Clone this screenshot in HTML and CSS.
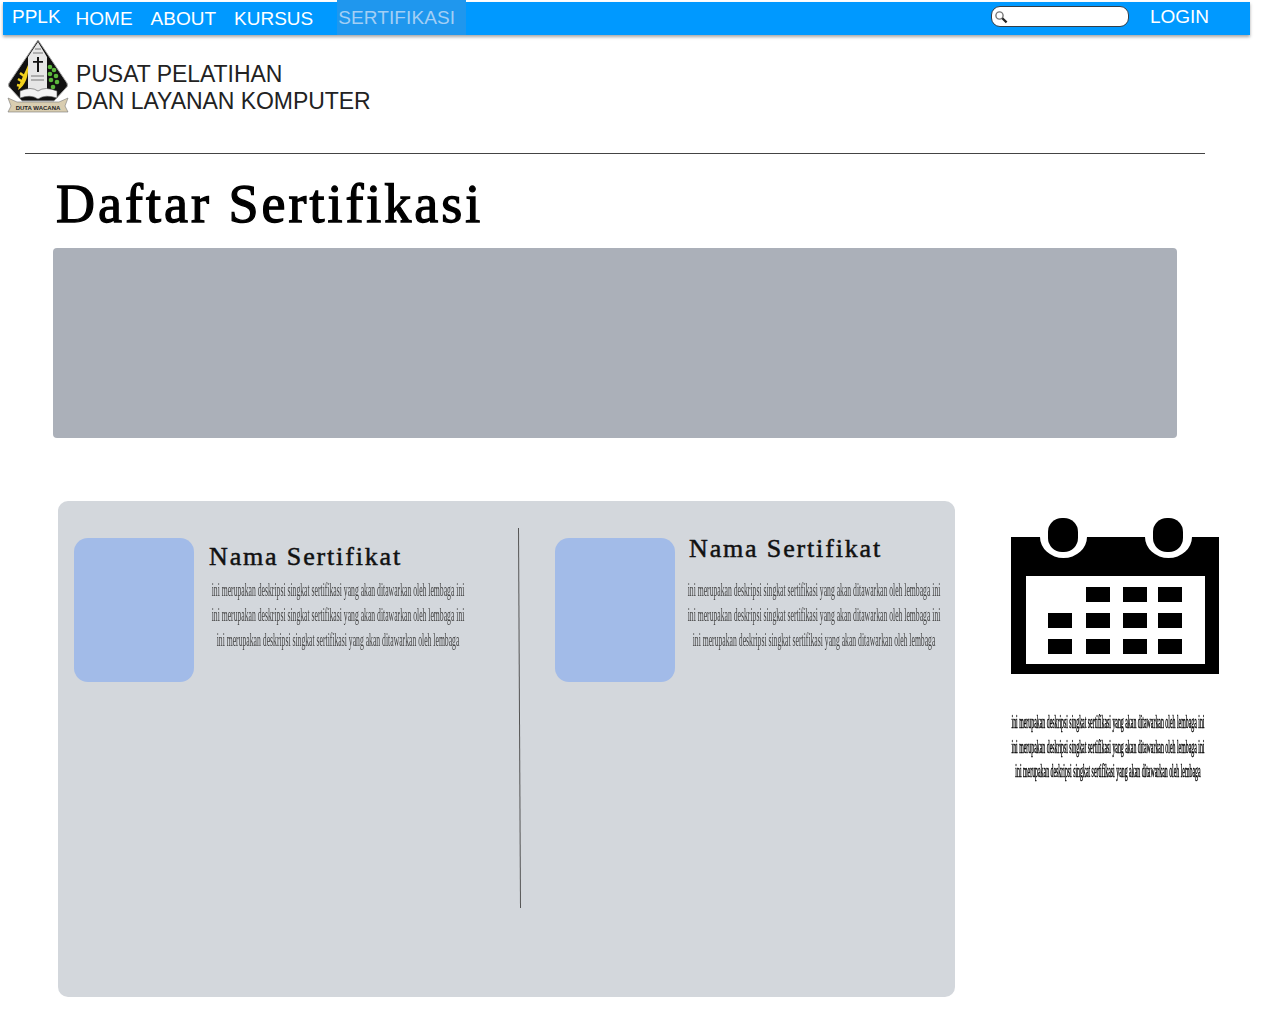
FILE: index.html
```html
<!DOCTYPE html>
<html>
<head>
<meta name="viewport" content="width=device-width, initial-scale=1">
<link rel="stylesheet" href="styles.css">
</head>
<body>

<div class="nav">
  <a class="brand">PPLK</a>
  <a class="nav-link home">HOME</a>
  <a class="nav-link about">ABOUT</a>
  <a class="nav-link kursus">KURSUS</a>
  <a class="nav-link active">SERTIFIKASI</a>
  <div class="search">
    <svg width="14" height="14" viewBox="0 0 14 14">
      <circle cx="5.5" cy="5.5" r="3.6" fill="#fff" stroke="#777" stroke-width="1.4"/>
      <path d="M8.3 8.3L12.6 12.4" stroke="#222" stroke-width="2.2"/>
    </svg>
  </div>
  <a class="login">LOGIN</a>
</div>

<div class="brand-row">
  <svg class="logo" width="62" height="74" viewBox="0 0 62 74">
    <path d="M31 0L60 43Q62 46 58 49L47 61H15L4 49Q0 46 2 43Z" fill="#111" stroke="#aaa" stroke-width="1"/>
    <path d="M31 2L40 17V54H21V17Z" fill="#e6e6e6"/>
    <path d="M30 17h2v4h4v1.8h-4V32h-2V22.8h-4V21h4z" fill="#111"/>
    <path d="M28 9h6M26 13h10M24 36h13M24 40h13" stroke="#777" stroke-width="1"/>
    <path d="M21 25C18 33 13 41 11 50C18 46 22 36 21 25Z" fill="#f2d21e"/>
    <path d="M13 33l4 3M11 39l5 3M10 45l4 1" stroke="#f2d21e" stroke-width="2.4"/>
    <g fill="#5cb83c">
      <circle cx="43" cy="27" r="2.3"/><circle cx="47" cy="30" r="2.3"/>
      <circle cx="43" cy="34" r="2.3"/><circle cx="49" cy="36" r="2.3"/>
      <circle cx="44" cy="40" r="2.3"/><circle cx="50" cy="42" r="2.3"/>
      <circle cx="46" cy="47" r="2.3"/>
    </g>
    <path d="M13 51Q24 46 31 51Q38 46 50 51V58Q38 54 31 59Q24 54 13 58Z" fill="#f4f4f4" stroke="#555" stroke-width=".6"/>
    <path d="M1 58L10 62L52 62L61 58L58 66L61 72H1L4 66Z" fill="#d9cdb0" stroke="#777" stroke-width=".6"/>
    <text x="31" y="70" class="logo-text" text-anchor="middle">DUTA WACANA</text>
  </svg>
  <div class="brand-name">PUSAT PELATIHAN<br>DAN LAYANAN KOMPUTER</div>
</div>

<hr class="rule">

<h1 class="page-title">Daftar Sertifikasi</h1>

<div class="banner"></div>

<div class="content">
  <div class="panel">
    <div class="cert cert-left">
      <div class="thumb"></div>
      <div>
        <h2 class="cert-title">Nama Sertifikat</h2>
        <div class="desc-box">
          <p class="desc">ini merupakan deskripsi singkat sertifikasi yang akan ditawarkan oleh lembaga ini<br>ini merupakan deskripsi singkat sertifikasi yang akan ditawarkan oleh lembaga ini<br>ini merupakan deskripsi singkat sertifikasi yang akan ditawarkan oleh lembaga</p>
        </div>
      </div>
    </div>
    <div class="divider"></div>
    <div class="cert cert-right">
      <div class="thumb"></div>
      <div>
        <h2 class="cert-title">Nama Sertifikat</h2>
        <div class="desc-box">
          <p class="desc">ini merupakan deskripsi singkat sertifikasi yang akan ditawarkan oleh lembaga ini<br>ini merupakan deskripsi singkat sertifikasi yang akan ditawarkan oleh lembaga ini<br>ini merupakan deskripsi singkat sertifikasi yang akan ditawarkan oleh lembaga</p>
        </div>
      </div>
    </div>
  </div>

  <div class="side">
    <svg class="calendar" width="208" height="156" viewBox="0 0 208 156">
      <rect x="0" y="19" width="208" height="137" fill="#000"/>
      <rect x="15" y="58" width="179" height="88" fill="#fff"/>
      <path d="M29 19a23.5 21 0 0 0 47 0zM134 19a23.5 21 0 0 0 47 0z" fill="#fff"/>
      <rect x="37" y="0" width="30" height="34" rx="14" fill="#000"/>
      <rect x="142" y="0" width="30" height="34" rx="14" fill="#000"/>
      <g fill="#000">
        <rect x="75" y="69" width="24" height="15"/><rect x="112" y="69" width="24" height="15"/><rect x="147" y="69" width="24" height="15"/>
        <rect x="37" y="95" width="24" height="15"/><rect x="75" y="95" width="24" height="15"/><rect x="112" y="95" width="24" height="15"/><rect x="147" y="95" width="24" height="15"/>
        <rect x="37" y="121" width="24" height="15"/><rect x="75" y="121" width="24" height="15"/><rect x="112" y="121" width="24" height="15"/><rect x="147" y="121" width="24" height="15"/>
      </g>
    </svg>
    <div class="side-box">
      <p class="side-desc">ini merupakan deskripsi singkat sertifikasi yang akan ditawarkan oleh lembaga ini<br>ini merupakan deskripsi singkat sertifikasi yang akan ditawarkan oleh lembaga ini<br>ini merupakan deskripsi singkat sertifikasi yang akan ditawarkan oleh lembaga</p>
    </div>
  </div>
</div>

</body>
</html>
```
FILE: styles.css
```css
* {
  box-sizing: border-box;
}

body {
  margin: 0;
  background-color: #fff;
  font-family: "Liberation Sans", Arial, sans-serif;
}

.nav {
  display: flex;
  align-items: center;
  width: 1247px;
  height: 33px;
  margin: 2px 0 0 3px;
  background-color: #0099ff;
  box-shadow: 0 2px 3px rgba(0, 0, 0, .35);
  color: #fff;
  font-size: 19px;
}

.brand {
  margin: -3px 15px 0 9px;
}

.nav-link {
  margin-right: 18px;
}

.nav-link.kursus {
  margin-right: 24px;
}

.nav-link.active {
  align-self: stretch;
  display: flex;
  align-items: center;
  width: 129px;
  margin: -2px 0 0 0;
  padding: 0 0 0 1px;
  background-color: #1f97ee;
  color: #a3cff5;
  letter-spacing: .1px;
}

.search {
  display: flex;
  align-items: center;
  width: 138px;
  height: 21px;
  margin: -4px 0 0 auto;
  padding-left: 2px;
  background-color: #fff;
  border: 1.5px solid #333f4a;
  border-radius: 9px;
}

.login {
  margin: -4px 41px 0 21px;
}

.brand-row {
  display: flex;
  align-items: flex-start;
  height: 113px;
  margin-top: 5px;
  padding-left: 7px;
}

.logo-text {
  font: bold 6px "Liberation Sans", Arial, sans-serif;
  fill: #222;
}

.brand-name {
  margin: 21px 0 0 7px;
  color: #222;
  font-size: 23px;
  line-height: 27px;
  letter-spacing: -.05px;
}

.rule {
  width: 1180px;
  height: 1px;
  margin: 0 0 0 25px;
  border: 0;
  background-color: #444;
}

.page-title {
  height: 94px;
  margin: 0 0 0 56px;
  padding-top: 20px;
  color: #000;
  font: normal 54px/60px "Liberation Serif", serif;
  letter-spacing: 3px;
  -webkit-text-stroke: 1.3px #000;
}

.banner {
  width: 1124px;
  height: 190px;
  margin-left: 53px;
  background-color: #abb0b9;
  border-radius: 4px;
}

.content {
  display: flex;
  align-items: flex-start;
  margin: 63px 0 0 58px;
}

.panel {
  display: flex;
  align-items: flex-start;
  width: 897px;
  height: 496px;
  padding-top: 27px;
  background-color: #d3d7dc;
  border-radius: 10px;
}

.cert {
  display: flex;
  padding-top: 10px;
}

.cert-left {
  width: 461px;
  padding-left: 16px;
  column-gap: 15px;
}

.cert-right {
  padding-left: 35px;
  column-gap: 14px;
}

.divider {
  width: 1px;
  height: 380px;
  background-color: #555;
  transform: rotate(-.3deg);
}

.thumb {
  flex: none;
  width: 120px;
  height: 144px;
  background-color: #a2bbe8;
  border-radius: 14px;
}

.cert-title {
  height: 30px;
  margin: 0;
  color: #111;
  font: normal 26px/30px "Liberation Serif", serif;
  letter-spacing: 1.85px;
  -webkit-text-stroke: .5px #111;
}

.cert-left .cert-title {
  margin-top: 4px;
}

.cert-right .cert-title {
  margin-top: -4px;
}

.desc-box {
  width: 256px;
  height: 76px;
}

.cert-left .desc-box {
  margin: 6px 0 0 2px;
}

.cert-right .desc-box {
  margin: 14px 0 0 -2px;
}

.desc {
  width: 595px;
  margin: 0;
  color: #444;
  font: 18px/25px "Liberation Serif", serif;
  text-align: center;
  white-space: nowrap;
  transform: scaleX(.427);
  transform-origin: left top;
  filter: grayscale(1);
}

.side {
  width: 208px;
  margin-left: 56px;
  padding-top: 17px;
}

.calendar {
  display: block;
}

.side-box {
  width: 194px;
  margin-top: 36px;
}

.side-desc {
  width: 595px;
  margin: 0;
  color: #000;
  font: 18px/24.5px "Liberation Serif", serif;
  text-align: center;
  white-space: nowrap;
  -webkit-text-stroke: .5px #000;
  transform: scaleX(.326);
  transform-origin: left top;
  filter: grayscale(1);
}
```
